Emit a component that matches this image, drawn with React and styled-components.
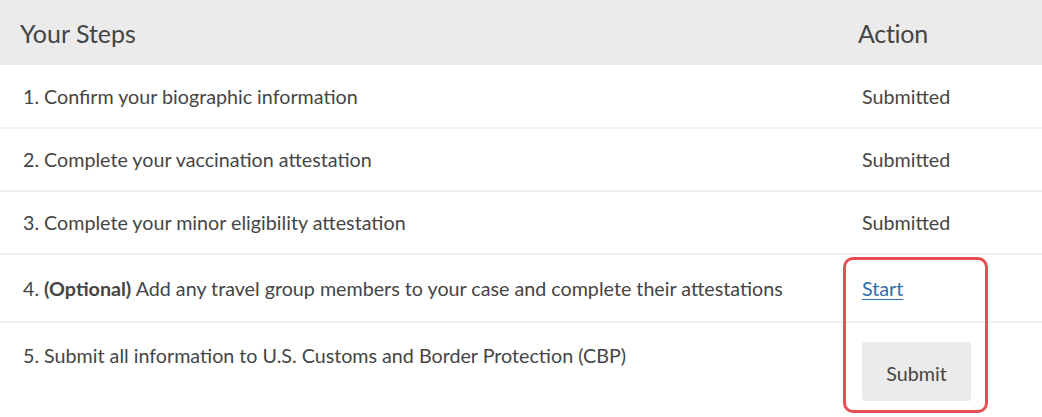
import React from "react";
import styled, { createGlobalStyle } from "styled-components";

const Global = createGlobalStyle`
  html, body { margin: 0; padding: 0; background: #fff; }
  body { font-family: "Lato", "Noto Sans", sans-serif; color: #454545; }
`;

const Table = styled.div`
  position: relative;
  width: 1042px;
`;

const HeaderRow = styled.div`
  display: grid;
  grid-template-columns: 1fr 184px;
  align-items: center;
  height: 65px;
  background: #ebebeb;
  font-size: 25px;
  color: #454545;
`;

const HeadCell = styled.div`
  padding-left: ${(p) => p.$pl}px;
  letter-spacing: ${(p) => p.$ls || 0}px;
`;

const Row = styled.div`
  display: grid;
  grid-template-columns: 1fr 184px;
  align-items: ${(p) => (p.$top ? "start" : "center")};
  height: ${(p) => p.$h}px;
  border-bottom: ${(p) => (p.$last ? "none" : "2px solid #efefef")};
  box-sizing: border-box;
  font-size: 19.7px;
  padding-top: ${(p) => p.$pt || 0}px;
`;

const StepCell = styled.div`
  padding-left: 23px;
`;

const ActionCell = styled.div`
  padding-left: 4px;
`;

const Link = styled.a`
  color: #2f6ea8;
  text-decoration: underline;
  text-underline-offset: 3px;
`;

const Button = styled.button`
  font-family: inherit;
  font-size: 19.7px;
  color: #454545;
  background: #ebebeb;
  border: none;
  border-radius: 3px;
  width: 109px;
  height: 59px;
  margin-top: -2px;
  padding: 3px 0 0;
`;

const Highlight = styled.div`
  position: absolute;
  left: 843px;
  top: 257px;
  width: 145px;
  height: 156px;
  box-sizing: border-box;
  border: 3px solid #ea4c53;
  border-radius: 10px;
  pointer-events: none;
`;

const steps = [
  { text: "1. Confirm your biographic information", action: "Submitted", h: 64 },
  { text: "2. Complete your vaccination attestation", action: "Submitted", h: 63 },
  { text: "3. Complete your minor eligibility attestation", action: "Submitted", h: 63 },
];

export default function App() {
  return (
    <>
      <Global />
      <Table>
        <HeaderRow>
          <HeadCell $pl={20}>Your Steps</HeadCell>
          <HeadCell $pl={0} $ls={-0.3}>Action</HeadCell>
        </HeaderRow>
        {steps.map((s) => (
          <Row key={s.text} $h={s.h}>
            <StepCell>{s.text}</StepCell>
            <ActionCell>{s.action}</ActionCell>
          </Row>
        ))}
        <Row $h={68}>
          <StepCell>
            4. <b>(Optional)</b> Add any travel group members to your case and complete their attestations
          </StepCell>
          <ActionCell>
            <Link href="#">Start</Link>
          </ActionCell>
        </Row>
        <Row $h={94} $top $pt={21} $last>
          <StepCell>5. Submit all information to U.S. Customs and Border Protection (CBP)</StepCell>
          <ActionCell>
            <Button>Submit</Button>
          </ActionCell>
        </Row>
        <Highlight />
      </Table>
    </>
  );
}
